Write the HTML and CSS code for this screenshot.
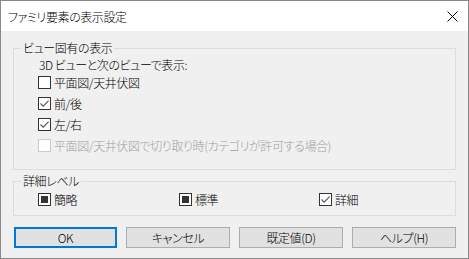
FILE: index.html
```html
<!DOCTYPE html>
<html lang="ja">
<head>
    <meta charset="UTF-8">
    <title>ファミリ要素の表示設定</title>
    <link rel="stylesheet" href="styles.css">
</head>
<body>
    <div class="window">
        <div class="titlebar">
            <span class="title">ファミリ要素の表示設定</span>
            <span class="close">
                <svg width="11" height="11" viewBox="0 0 11 11">
                    <path d="M0.5 0.5 L10.5 10.5 M10.5 0.5 L0.5 10.5" stroke="#000" stroke-width="1" fill="none"/>
                </svg>
            </span>
        </div>

        <div class="content">
            <!-- ビュー固有の表示 -->
            <fieldset class="group group-view">
                <legend>ビュー固有の表示</legend>
                <div class="group-body">
                    <div class="note">3D ビューと次のビューで表示:</div>
                    <label class="row"><span class="cb"></span>平面図/天井伏図</label>
                    <label class="row"><span class="cb checked"><svg width="11" height="11" viewBox="0 0 11 11"><path d="M1.5 5.5 L4.2 8.2 L9.6 2.6" stroke="#555" stroke-width="1.1" fill="none"/></svg></span>前/後</label>
                    <label class="row"><span class="cb checked"><svg width="11" height="11" viewBox="0 0 11 11"><path d="M1.5 5.5 L4.2 8.2 L9.6 2.6" stroke="#555" stroke-width="1.1" fill="none"/></svg></span>左/右</label>
                    <label class="row disabled"><span class="cb"></span>平面図/天井伏図で切り取り時(カテゴリが許可する場合)</label>
                </div>
            </fieldset>

            <!-- 詳細レベル -->
            <fieldset class="group group-detail">
                <legend>詳細レベル</legend>
                <div class="group-body levels">
                    <label class="row"><span class="cb mixed"></span>簡略</label>
                    <label class="row"><span class="cb mixed"></span>標準</label>
                    <label class="row"><span class="cb checked"><svg width="11" height="11" viewBox="0 0 11 11"><path d="M1.5 5.5 L4.2 8.2 L9.6 2.6" stroke="#555" stroke-width="1.1" fill="none"/></svg></span>詳細</label>
                </div>
            </fieldset>

            <div class="buttons">
                <button class="default">OK</button>
                <button>キャンセル</button>
                <button>既定値(D)</button>
                <button>ヘルプ(H)</button>
            </div>
        </div>
    </div>
</body>
</html>
```

FILE: styles.css
```css
html, body {
    margin: 0;
    padding: 0;
}
body {
    font-family: "Noto Sans CJK JP", "Noto Sans", sans-serif;
    font-size: 12px;
    font-weight: 300;
    font-feature-settings: "palt";
    letter-spacing: -0.4px;
    color: #000;
    background-color: #1e2a44;
}
.window {
    width: 469px;
    height: 259px;
    box-sizing: border-box;
    border: 1px solid #888;
    background-color: #f0f0f0;
}
.titlebar {
    height: 30px;
    background-color: #fff;
    display: flex;
    align-items: center;
    justify-content: space-between;
    padding: 0 10px 0 7px;
    line-height: 14px;
}
.title {
    padding-top: 1px;
}
.close {
    display: flex;
    padding-top: 1px;
}
.content {
    padding: 10px 12px 0 12px;
}
.group {
    margin: 0;
    padding: 0;
    border: 1px solid #dcdcdc;
    min-width: 0;
}
.group legend {
    margin-left: 7px;
    padding: 0 2px;
    line-height: 14px;
}
.group-body {
    padding-left: 24px;
}
.group-view .group-body {
    padding-top: 3px;
    padding-bottom: 13px;
}
.group-detail {
    margin-top: 4px;
}
.group-detail .group-body {
    padding-top: 1px;
    padding-bottom: 5px;
}
.note {
    line-height: 14px;
    padding-left: 1px;
}
.row {
    display: flex;
    align-items: center;
    height: 21px;
    line-height: 14px;
}
.row.disabled {
    color: #a0a0a0;
}
.cb {
    width: 11px;
    height: 11px;
    border: 1px solid #333;
    background-color: #fff;
    margin-right: 3px;
    display: flex;
    align-items: center;
    justify-content: center;
    flex-shrink: 0;
}
.row.disabled .cb {
    border-color: #ccc;
}
.cb.mixed::after {
    content: "";
    width: 7px;
    height: 7px;
    background-color: #333;
}
.levels {
    display: grid;
    grid-template-columns: 141px 140px auto;
}
.buttons {
    display: flex;
    justify-content: space-between;
    margin-top: 11px;
    padding: 0 0 0 1px;
}
button {
    width: 104px;
    height: 21px;
    box-sizing: border-box;
    padding: 0;
    font-family: inherit;
    font-size: 12px;
    font-weight: 300;
    font-feature-settings: "palt";
    letter-spacing: -0.4px;
    line-height: 14px;
    color: #000;
    background-color: #e1e1e1;
    border: 1px solid #adadad;
}
button.default {
    width: 103px;
    border: 2px solid #0078d7;
}
```
